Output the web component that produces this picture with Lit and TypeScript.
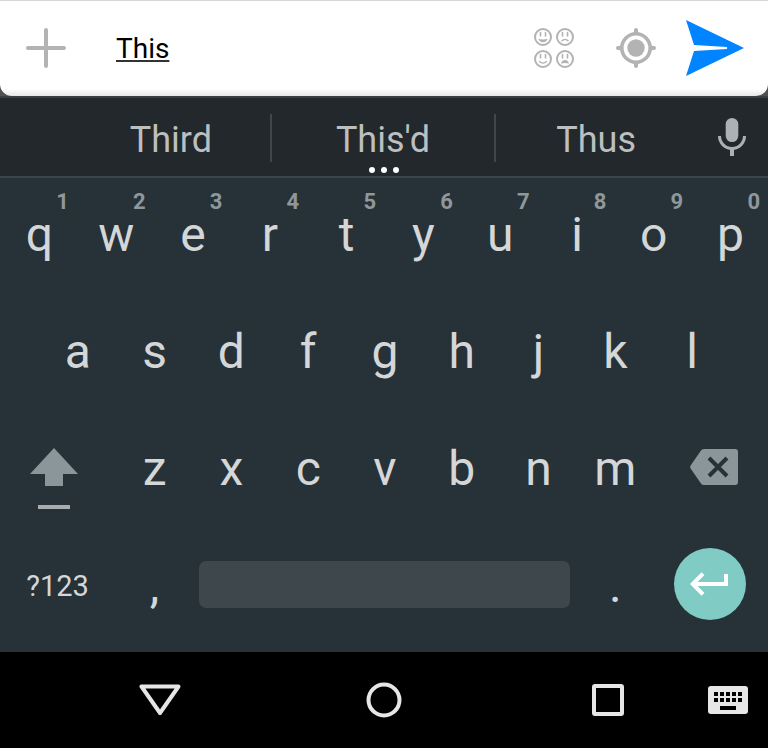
import { LitElement, html, css, svg, nothing } from "lit";
import { customElement, property, state } from "lit/decorators.js";

const face = (x: number, y: number, mouth: unknown) => svg`
  <g transform="translate(${x} ${y})">
    <circle r="8" fill="none" stroke="currentColor" stroke-width="2" />
    <path d="M-2.5 -4.5v3.5M2.5 -4.5v3.5" fill="none" stroke="currentColor" stroke-width="1.6" stroke-linecap="round" />
    ${mouth}
  </g>`;

const icons = {
  plus: html`<svg width="40" height="40" viewBox="0 0 40 40" aria-hidden="true">
    <path d="M20 2v36M2 20h36" stroke="currentColor" stroke-width="4" stroke-linecap="round" />
  </svg>`,
  faces: html`<svg width="40" height="40" viewBox="0 0 40 40" aria-hidden="true">
    ${face(9, 9, svg`<path d="M-4.6 1.8Q0 3.2 4.6 1.8Q3.8 5.2 0 5.2T-4.6 1.8Z" fill="currentColor" />`)}
    ${face(31, 9, svg`<path d="M-3.5 4.2Q0 0.6 3.5 4.2" fill="none" stroke="currentColor" stroke-width="1.4" />`)}
    ${face(9, 31, svg`<path d="M-3.8 2.2Q0 6 3.8 2.2" fill="none" stroke="currentColor" stroke-width="1.4" />`)}
    ${face(31, 31, svg`<path d="M-4 4.8Q-3.4 1 0 1T4 4.8Q0 3.4 -4 4.8Z" fill="currentColor" />`)}
  </svg>`,
  locate: html`<svg width="40" height="40" viewBox="0 0 40 40" aria-hidden="true">
    <circle cx="20" cy="20" r="14.2" fill="none" stroke="currentColor" stroke-width="3.6" />
    <circle cx="20" cy="20" r="8.7" fill="currentColor" />
    <path d="M20 2v3M20 35v3M2 20h3M35 20h3" stroke="currentColor" stroke-width="4" stroke-linecap="round" />
  </svg>`,
  send: html`<svg width="58" height="56" viewBox="0 0 58 56" aria-hidden="true">
    <path d="M0 0L58 28L0 56L8 31L41 29V27L8 25Z" fill="currentColor" />
  </svg>`,
  mic: html`<svg width="28" height="38" viewBox="0 0 28 38" aria-hidden="true">
    <rect x="7.7" y="0" width="12.6" height="24" rx="6.3" fill="currentColor" />
    <path d="M1.5 18a12.5 12.5 0 0 0 25 0" fill="none" stroke="currentColor" stroke-width="3" />
    <path d="M14 30v8" stroke="currentColor" stroke-width="4" />
  </svg>`,
  shift: html`<svg width="48" height="38" viewBox="0 0 48 38" aria-hidden="true">
    <path d="M24 0L48 26H33V38H15V26H0Z" fill="currentColor" />
  </svg>`,
  erase: html`<svg width="48" height="36" viewBox="0 0 48 36" aria-hidden="true">
    <path d="M14 0H45a3 3 0 0 1 3 3V33a3 3 0 0 1-3 3H14q-2 0-3-1.6L0.6 19.4q-0.8-1.4 0-2.8L11 1.6Q12 0 14 0Z" fill="currentColor" />
    <path d="M19 9L37 27M37 9L19 27" stroke="#263238" stroke-width="4" />
  </svg>`,
  enter: html`<svg width="40" height="24" viewBox="0 0 40 24" aria-hidden="true">
    <path d="M13 1.6L2.8 12L13 22.4M3 12H36V2" fill="none" stroke="currentColor" stroke-width="4" />
  </svg>`,
  back: html`<svg width="42" height="32" viewBox="0 0 42 32" aria-hidden="true">
    <path d="M2.5 2.5H39.5L21 29Z" fill="none" stroke="currentColor" stroke-width="4" stroke-linejoin="round" />
  </svg>`,
  home: html`<svg width="36" height="36" viewBox="0 0 36 36" aria-hidden="true">
    <circle cx="18" cy="18" r="15.5" fill="none" stroke="currentColor" stroke-width="4" />
  </svg>`,
  recent: html`<svg width="32" height="32" viewBox="0 0 32 32" aria-hidden="true">
    <rect x="2" y="2" width="28" height="28" rx="1" fill="none" stroke="currentColor" stroke-width="4" />
  </svg>`,
  keyboard: html`<svg width="40" height="28" viewBox="0 0 40 28" aria-hidden="true">
    <rect width="40" height="28" rx="3" fill="currentColor" />
    <path d="M6 8h28M6 14h28" stroke="#000" stroke-width="4" stroke-dasharray="4 2" />
    <path d="M12 22h16" stroke="#000" stroke-width="4" />
  </svg>`,
};

const reset = css`
  button {
    appearance: none;
    box-sizing: border-box;
    margin: 0;
    padding: 0;
    border: 0;
    background: none;
    color: inherit;
    font: inherit;
    display: flex;
    align-items: center;
    justify-content: center;
    cursor: pointer;
  }
  svg {
    display: block;
    flex: none;
  }
`;

@customElement("compose-bar")
class ComposeBar extends LitElement {
  @property() text = "";

  static styles = [
    reset,
    css`
      :host {
        display: block;
        background: #505050;
      }
      .bar {
        box-sizing: border-box;
        height: 96px;
        display: flex;
        padding: 0 15px 1px 0;
        border-top: 1px solid #d6d6d6;
        border-radius: 0 0 12px 12px;
        background: linear-gradient(to top, #e6e6e6, #fff 7px);
        color: #b3b3b3;
      }
      .add {
        width: 92px;
      }
      .field {
        flex: 1;
        min-width: 0;
        margin: 0 0 0 24px;
        padding: 0;
        border: 0;
        outline: 0;
        background: none;
        color: #000;
        font: 28px Roboto, sans-serif;
        text-decoration: underline 2px #333;
        text-underline-offset: 2px;
      }
      .tool {
        width: 82px;
      }
      .send {
        width: 76px;
        color: #0084ff;
      }
    `,
  ];

  render() {
    return html`<form class="bar" @submit=${(e: Event) => e.preventDefault()}>
      <button class="add" type="button" aria-label="Add attachment">${icons.plus}</button>
      <input class="field" type="text" aria-label="Message" spellcheck="false" .value=${this.text} />
      <button class="tool" type="button" aria-label="Emoji">${icons.faces}</button>
      <button class="tool" type="button" aria-label="Location">${icons.locate}</button>
      <button class="send" type="submit" aria-label="Send">${icons.send}</button>
    </form>`;
  }
}

@customElement("suggestion-strip")
class SuggestionStrip extends LitElement {
  @property({ attribute: false }) words: string[] = [];

  static styles = [
    reset,
    css`
      :host {
        display: grid;
        grid-template-columns: 72px 8fr 9fr 8fr 72px;
        align-items: center;
        box-sizing: border-box;
        height: 82px;
        padding-top: 2px;
        border-top: 2px solid #384044;
        border-bottom: 2px solid #3b454b;
        background: #23282c;
        color: #bcbfc0;
        font: 36px Roboto, sans-serif;
      }
      .word {
        position: relative;
        height: 48px;
        padding-top: 4px;
        border-right: 2px solid #40464a;
      }
      .word:first-of-type {
        grid-column: 2;
      }
      .last {
        border: 0;
      }
      .more {
        position: absolute;
        top: 53px;
        left: 50%;
        width: 30px;
        margin-left: -14px;
        display: flex;
        justify-content: space-between;
      }
      .dot {
        width: 6px;
        height: 6px;
        border-radius: 50%;
        background: #fff;
      }
      .mic {
        height: 48px;
        padding-bottom: 2px;
        color: #abb2b6;
      }
    `,
  ];

  render() {
    return html`${this.words.map(
        (word, i) => html`<button class="word ${i === 2 ? "last" : ""}" type="button">
          ${word}
          ${i === 1
            ? html`<span class="more"><i class="dot"></i><i class="dot"></i><i class="dot"></i></span>`
            : nothing}
        </button>`
      )}
      <button class="mic" type="button" aria-label="Voice input">${icons.mic}</button>`;
  }
}

@customElement("key-pad")
class KeyPad extends LitElement {
  static styles = [
    reset,
    css`
      :host {
        display: block;
        flex: 1;
        padding-bottom: 6px;
        background: #263238;
        color: #d4d6d7;
        font: 48px Roboto, sans-serif;
      }
      .row {
        display: grid;
        grid-template-columns: repeat(20, 1fr);
        height: 117px;
      }
      button {
        position: relative;
        grid-column: span 2;
        min-width: 0;
        padding: 0 0 4px 2px;
      }
      .inset > :first-child {
        grid-column: 2 / span 2;
      }
      .wide {
        grid-column: span 3;
        padding: 0 0 8px;
      }
      .hint {
        position: absolute;
        top: 11px;
        right: 8px;
        color: #8f979b;
        font-size: 22px;
        font-weight: 700;
        line-height: 26px;
      }
      .shift {
        padding-right: 8px;
        color: #8b969b;
      }
      .lock {
        position: absolute;
        top: 93px;
        width: 32px;
        height: 4px;
        background: #a9acad;
      }
      .erase {
        padding-left: 8px;
        color: #8b969b;
      }
      .symbols {
        padding-bottom: 4px;
        font-size: 29px;
      }
      .space {
        grid-column: span 10;
        padding: 0 6px 6px 7px;
      }
      .slab {
        flex: 1;
        height: 47px;
        border-radius: 7px;
        background: #3d474c;
      }
      .disc {
        display: flex;
        align-items: center;
        justify-content: center;
        width: 72px;
        height: 72px;
        border-radius: 50%;
        background: #80cbc4;
        color: #fff;
      }
    `,
  ];

  private letters(keys: string) {
    return [...keys].map((key) => html`<button type="button">${key}</button>`);
  }

  render() {
    return html`
      <div class="row">
        ${[..."qwertyuiop"].map(
          (key, i) => html`<button type="button">${key}<span class="hint">${(i + 1) % 10}</span></button>`
        )}
      </div>
      <div class="row inset">${this.letters("asdfghjkl")}</div>
      <div class="row">
        <button class="wide shift" type="button" aria-label="Shift">${icons.shift}<span class="lock"></span></button>
        ${this.letters("zxcvbnm")}
        <button class="wide erase" type="button" aria-label="Delete">${icons.erase}</button>
      </div>
      <div class="row">
        <button class="wide symbols" type="button">?123</button>
        <button type="button">,</button>
        <button class="space" type="button" aria-label="Space"><span class="slab"></span></button>
        <button type="button">.</button>
        <button class="wide" type="button" aria-label="Enter"><span class="disc">${icons.enter}</span></button>
      </div>
    `;
  }
}

@customElement("system-nav")
class SystemNav extends LitElement {
  static styles = [
    reset,
    css`
      :host {
        display: grid;
        grid-template-columns: 5fr 9fr 5fr 80px;
        height: 96px;
        padding-left: 80px;
        background: #000;
        color: #e6e6e6;
      }
    `,
  ];

  render() {
    return html`
      <button type="button" aria-label="Back">${icons.back}</button>
      <button type="button" aria-label="Home">${icons.home}</button>
      <button type="button" aria-label="Recent apps">${icons.recent}</button>
      <button type="button" aria-label="Switch keyboard">${icons.keyboard}</button>
    `;
  }
}

@customElement("app-root")
class AppRoot extends LitElement {
  @state() private draft = "This";
  @state() private words = ["Third", "This'd", "Thus"];

  static styles = css`
    :host {
      display: flex;
      flex-direction: column;
      min-height: 100vh;
      background: #000;
    }
  `;

  render() {
    return html`
      <compose-bar .text=${this.draft}></compose-bar>
      <suggestion-strip .words=${this.words}></suggestion-strip>
      <key-pad></key-pad>
      <system-nav></system-nav>
    `;
  }
}
